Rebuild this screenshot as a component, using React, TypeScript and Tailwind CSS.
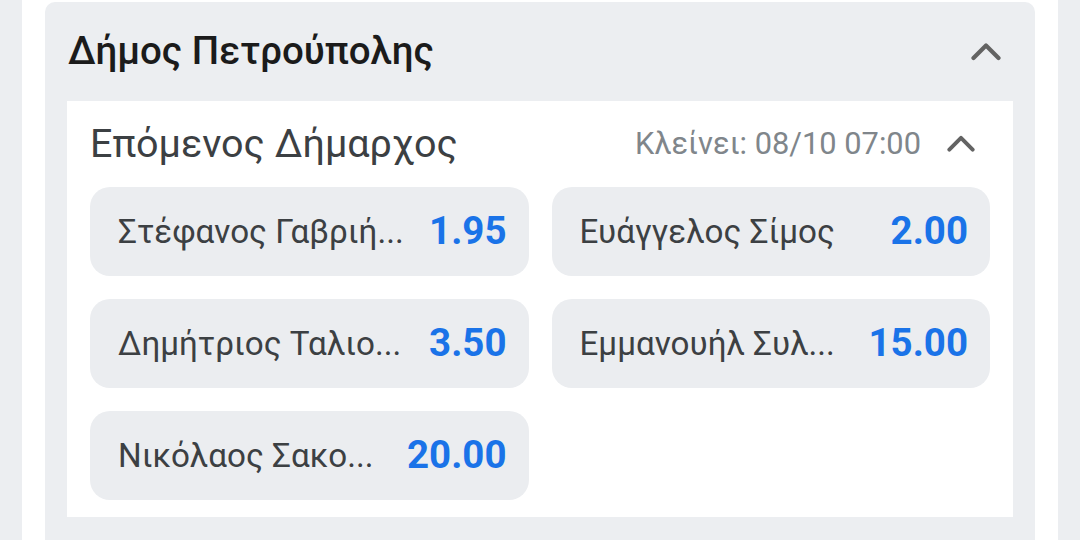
import React from "react";

const Chevron = ({ className }: { className?: string }) => (
  <svg className={className} viewBox="0 0 30 18" fill="none">
    <path d="M2.5 15 L15 2.5 L27.5 15" stroke="#636363" strokeWidth="4.2" strokeLinecap="round" strokeLinejoin="round" />
  </svg>
);

const items = [
  { name: "Στέφανος Γαβριή...", odd: "1.95" },
  { name: "Ευάγγελος Σίμος", odd: "2.00" },
  { name: "Δημήτριος Ταλιο...", odd: "3.50" },
  { name: "Εμμανουήλ Συλ...", odd: "15.00" },
  { name: "Νικόλαος Σακο...", odd: "20.00" },
];

export default function App() {
  return (
    <div
      className="flex h-[540px] w-[1080px] overflow-hidden bg-white"
      style={{ fontFamily: "Roboto, 'Noto Sans', sans-serif" }}
    >
      <div className="w-[22px] shrink-0 bg-[#eceef1]" />
      <div className="ml-[23px] mt-[2px] flex w-[990px] shrink-0 flex-col rounded-t-[10px] bg-[#eceef1] px-[22px]">
        <div className="flex h-[99px] items-center justify-between pl-[1px] pr-[12px]">
          <div className="text-[38.5px] font-medium leading-none text-[#1b1b1b]">Δήμος Πετρούπολης</div>
          <Chevron className="h-[18px] w-[30px]" />
        </div>
        <div className="flex flex-col bg-white px-[23px] pb-[17px]">
          <div className="flex h-[86px] items-center justify-between">
            <div className="text-[39.5px] leading-none text-[#3c4043]">Επόμενος Δήμαρχος</div>
            <div className="flex items-center gap-[26px] pr-[15px]">
              <div className="text-[30.8px] leading-none text-[#80868b]">Κλείνει: 08/10 07:00</div>
              <Chevron className="h-[18px] w-[28px]" />
            </div>
          </div>
          <div className="grid grid-cols-2 gap-x-[23px] gap-y-[23px]">
            {items.map((it) => (
              <div
                key={it.name}
                className="flex h-[89px] items-center justify-between rounded-[20px] bg-[#ebedf0] pl-[28px] pr-[22px]"
              >
                <div className="text-[33.2px] leading-none text-[#3c4043]">{it.name}</div>
                <div className="text-[38.5px] font-bold leading-none text-[#1a73e8]">{it.odd}</div>
              </div>
            ))}
          </div>
        </div>
      </div>
      <div className="ml-[23px] w-[22px] shrink-0 bg-[#eceef1]" />
    </div>
  );
}
